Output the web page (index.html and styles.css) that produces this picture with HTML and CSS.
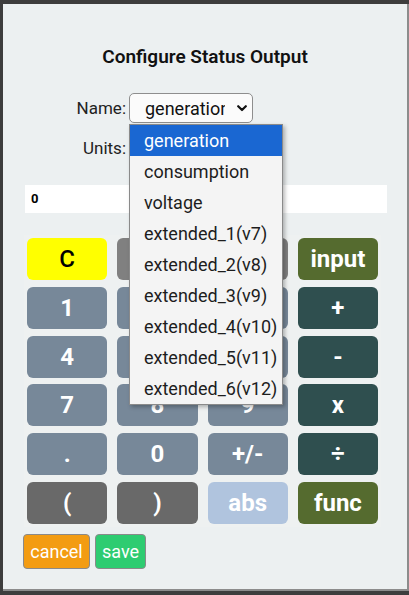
FILE: index.html
```html
<!DOCTYPE html>
<html>
<head>
<meta charset="utf-8">
<link rel="stylesheet" href="styles.css">
</head>
<body>
<div class="modal">
  <h2 class="title">Configure Status Output</h2>
  <div class="form">
    <label class="lbl">Name:</label>
    <div class="select-wrap">
      <div class="select"><span class="sel-text">generation</span><svg class="chev" width="10" height="7" viewBox="0 0 10 7"><polyline points="1.2,1.2 5,5 8.8,1.2" fill="none" stroke="#111" stroke-width="2.2" stroke-linecap="round" stroke-linejoin="round"/></svg></div>
      <ul class="dropdown">
        <li class="opt active">generation</li>
        <li class="opt">consumption</li>
        <li class="opt">voltage</li>
        <li class="opt">extended_1(v7)</li>
        <li class="opt">extended_2(v8)</li>
        <li class="opt">extended_3(v9)</li>
        <li class="opt">extended_4(v10)</li>
        <li class="opt">extended_5(v11)</li>
        <li class="opt">extended_6(v12)</li>
      </ul>
    </div>
    <label class="lbl">Units:</label>
    <div class="select units"></div>
  </div>
  <div class="display">0</div>
  <div class="keypad">
    <button class="key k-clear">C</button>
    <button class="key k-gray">&larr;</button>
    <button class="key k-gray">%</button>
    <button class="key k-olive">input</button>
    <button class="key k-num">1</button>
    <button class="key k-num">2</button>
    <button class="key k-num">3</button>
    <button class="key k-op">+</button>
    <button class="key k-num">4</button>
    <button class="key k-num">5</button>
    <button class="key k-num">6</button>
    <button class="key k-op">-</button>
    <button class="key k-num">7</button>
    <button class="key k-num">8</button>
    <button class="key k-num">9</button>
    <button class="key k-op">x</button>
    <button class="key k-num">.</button>
    <button class="key k-num">0</button>
    <button class="key k-num">+/-</button>
    <button class="key k-op">&divide;</button>
    <button class="key k-dim">(</button>
    <button class="key k-dim">)</button>
    <button class="key k-light">abs</button>
    <button class="key k-olive">func</button>
  </div>
  <div class="actions">
    <button class="act cancel">cancel</button>
    <button class="act save">save</button>
  </div>
</div>
</body>
</html>
```

FILE: styles.css
```css
* { box-sizing: border-box; }
html, body { margin: 0; padding: 0; }
body {
  background: #3d3d3d;
  width: 409px;
  height: 595px;
  overflow: hidden;
  font-family: Roboto, "Liberation Sans", sans-serif;
}
.modal {
  margin: 4px 0 0 3px;
  width: 406px;
  height: 587px;
  background: #ecf0f1;
  border-right: 2px solid #8c8c8c;
  border-bottom: 2px solid #8c8c8c;
  padding: 42px 21px 0;
}
.title {
  margin: 0;
  font-size: 19px;
  line-height: 22px;
  font-weight: 600;
  text-align: center;
  color: #111;
}
.form {
  margin-top: 25px;
  display: grid;
  grid-template-columns: 102px auto;
  justify-content: start;
  column-gap: 3px;
  row-gap: 10px;
  align-items: center;
}
.lbl {
  text-align: right;
  font-size: 17px;
  color: #222;
}
.select-wrap { position: relative; width: 124px; }
.select {
  width: 124px;
  height: 30px;
  border: 1px solid #8e8e8e;
  border-radius: 5px;
  background: #fbfbfb;
  display: flex;
  align-items: center;
  padding-left: 15px;
}
.sel-text {
  width: 80px;
  overflow: hidden;
  white-space: nowrap;
  font-size: 18px;
  color: #111;
}
.chev { margin-left: 12px; }
.dropdown {
  position: absolute;
  top: 31px;
  left: 0;
  width: 154px;
  margin: 0;
  padding: 0;
  list-style: none;
  background: #f4f4f4;
  border: 1px solid #8a8a8a;
  box-shadow: 2px 2px 4px rgba(0,0,0,0.28);
  z-index: 5;
}
.opt {
  height: 31px;
  line-height: 31px;
  padding-left: 14px;
  font-size: 18px;
  color: #1d1d1d;
  white-space: nowrap;
}
.opt.active { background: #1a67d2; color: #fff; }
.display {
  margin: 22px 0 0 1px;
  width: 362px;
  height: 28px;
  background: #fff;
  font-size: 13px;
  font-weight: 700;
  line-height: 28px;
  padding-left: 6px;
  color: #000;
}
.keypad {
  margin-top: 22px;
  width: 357px;
  padding: 3px;
  background: #eef1f1;
  display: grid;
  grid-template-columns: repeat(4, 1fr);
  column-gap: 10px;
  row-gap: 6.8px;
}
.key {
  height: 42px;
  border: none;
  border-radius: 6px;
  font-family: Roboto, "Liberation Sans", sans-serif;
  font-size: 24px;
  font-weight: 700;
  color: #fff;
  padding: 0;
}
.k-clear { background: #ffff00; color: #000; font-weight: 500; }
.k-gray { background: #808080; }
.k-num { background: #778899; }
.k-op { background: #2f4f4f; }
.k-olive { background: #556b2f; }
.k-dim { background: #696969; }
.k-light { background: #b0c4de; }
.actions {
  margin: 7px 0 0 -1px;
  display: flex;
  gap: 5px;
}
.act {
  height: 35px;
  border: 1px solid #8a8a8a;
  border-radius: 4px;
  font-family: Roboto, "Liberation Sans", sans-serif;
  font-size: 18px;
  color: #fff;
  padding: 0 4px;
}
.cancel { background: #f39c12; width: 67px; }
.save { background: #2ecc71; width: 51px; }
```
